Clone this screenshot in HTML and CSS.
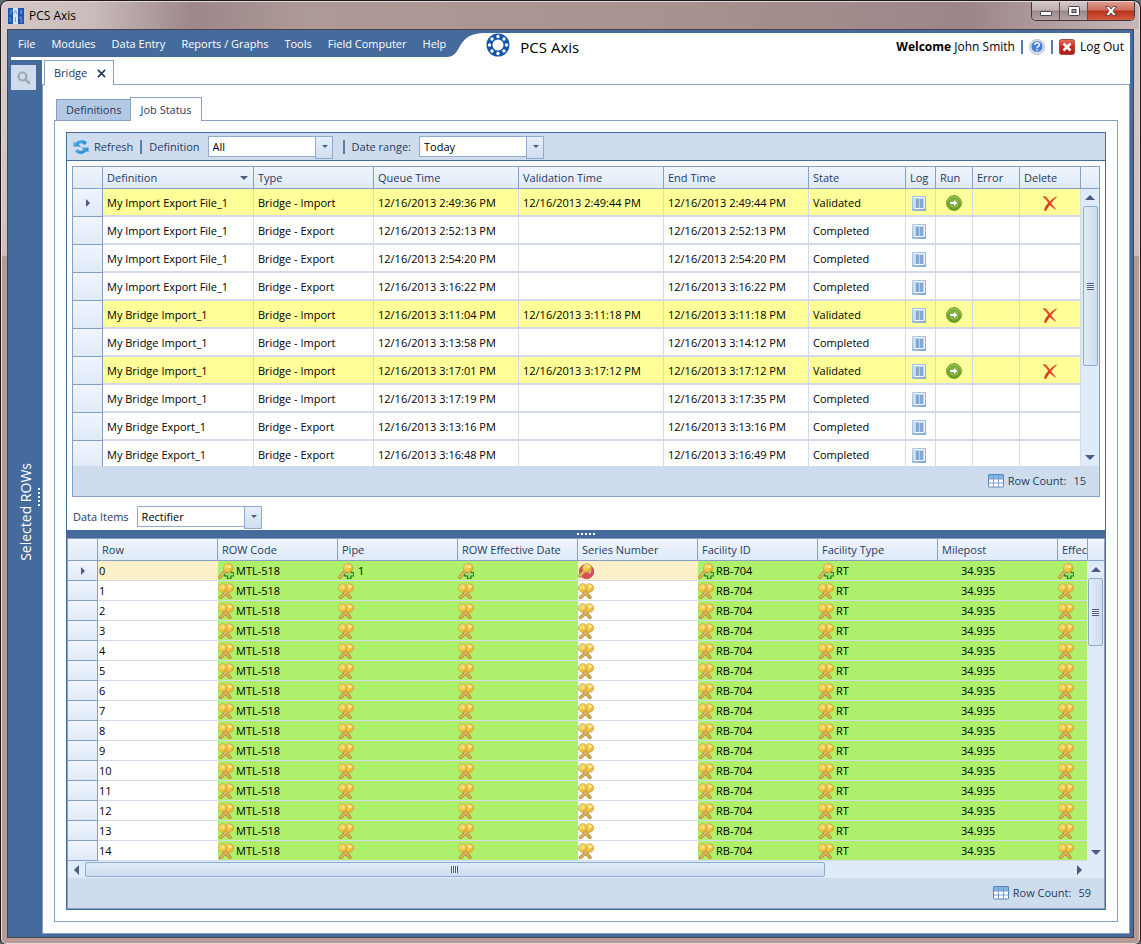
FILE: index.html
```html
<!DOCTYPE html>
<html lang="en">
<head>
  <meta charset="UTF-8">
  <title>PCS Axis</title>
  <link rel="stylesheet" href="styles.css">
</head>
<body>
<!-- icon definitions -->
<svg class="defs" aria-hidden="true">
  <defs>
    <linearGradient id="gold" x1="0" y1="0" x2="1" y2="1">
      <stop offset="0" stop-color="#fbe98c"/>
      <stop offset=".5" stop-color="#f2cf45"/>
      <stop offset="1" stop-color="#d9a23a"/>
    </linearGradient>
    <linearGradient id="green" x1="0" y1="0" x2="0" y2="1">
      <stop offset="0" stop-color="#a3cb57"/>
      <stop offset="1" stop-color="#5f9c12"/>
    </linearGradient>
    <linearGradient id="steel" x1="0" y1="0" x2="1" y2="1">
      <stop offset="0" stop-color="#b4d0ec"/>
      <stop offset="1" stop-color="#84a5cc"/>
    </linearGradient>
    <linearGradient id="red" x1="0" y1="0" x2="0" y2="1">
      <stop offset="0" stop-color="#e8705c"/>
      <stop offset=".5" stop-color="#c8291d"/>
      <stop offset="1" stop-color="#b01a12"/>
    </linearGradient>
    <linearGradient id="sky" x1="0" y1="0" x2="1" y2="1">
      <stop offset="0" stop-color="#5dc0f2"/>
      <stop offset="1" stop-color="#1877c9"/>
    </linearGradient>
  </defs>
  <symbol id="i-log" viewBox="0 0 16 16">
    <rect x="1" y="1" width="14" height="15" rx="1" fill="url(#steel)"/>
    <rect x="3" y="3" width="10" height="11" fill="#bcd3ec"/>
    <path d="M3 2.500h10.500v11H3z" fill="none" stroke="#eef5fd"/>
    <path d="M5 4h3v9H5zM9 4h3v9H9z" fill="#86a9d3"/>
  </symbol>
  <symbol id="i-run" viewBox="0 0 16 16">
    <circle cx="8" cy="8" r="7.400" fill="url(#green)" stroke="#6f9a36"/>
    <circle cx="8" cy="8" r="5.200" fill="#8fbf3c" stroke="#5f8f1c" stroke-width=".7"/>
    <path d="M3.800 6.500h3.700V4L12.200 8 7.500 12V9.500H3.800z" fill="#fff" stroke="#6f8f48" stroke-width=".8"/>
  </symbol>
  <symbol id="i-del" viewBox="0 0 16 16">
    <path d="M.5 2C2 .8 3.500 1 4.500 2.200L8 6.500C10 4 12.500 2 15.500 1.200 13 3.500 11 5.500 9.200 8l4.800 6.800C11.500 13.500 9.500 11.800 7.800 10 6.200 12.200 5 14 4.200 15.800H2C2.500 12.500 4 10.200 6.200 8 4.500 5.500 3 3.200.5 2z" fill="#dd3a1e"/>
    <path d="M2.500 2.200L8 8l5 5.500" fill="none" stroke="#f0765a" stroke-width=".8"/>
  </symbol>
  <symbol id="i-key" viewBox="0 0 16 16">
    <path d="M9.500 15.800V13h-3v-3.500h3V7h3.500v2.500h2.800V13H13v2.800z" fill="#9ce26c" stroke="#1c7d1c" stroke-width="1.200"/>
    <path d="M8.200 7.200L1.800 14.200" stroke="#b98833" stroke-width="3.400" stroke-linecap="round"/>
    <path d="M8 7.500L1.800 14" stroke="#e3c277" stroke-width="1.800" stroke-linecap="round"/>
    <circle cx="10.300" cy="5" r="4.600" fill="url(#gold)" stroke="#cf9f3a" stroke-width=".8"/>
    <circle cx="11.500" cy="3.800" r="1.300" fill="#fff4c0"/>
  </symbol>
  <symbol id="i-stop" viewBox="0 0 16 16">
    <circle cx="8.500" cy="8.500" r="7.200" fill="#d9505a" stroke="#b8434d" stroke-width=".8"/>
    <path d="M11 10.500c1-1 1.500-2 1.500-3.500" fill="none" stroke="#f2b8b4" stroke-width="2"/>
    <path d="M8 6.500L1.800 13" stroke="#b98833" stroke-width="3.400" stroke-linecap="round"/>
    <path d="M8 6.500L1.800 12.800" stroke="#e3c277" stroke-width="1.800" stroke-linecap="round"/>
    <circle cx="9" cy="5" r="4.300" fill="url(#gold)" stroke="#cf9f3a" stroke-width=".7"/>
    <circle cx="10.500" cy="3.800" r="1.100" fill="#fff4c0"/>
  </symbol>
  <symbol id="i-keys" viewBox="0 0 16 16">
    <path d="M5 7l7 7.500M11 7l-8.500 7.500" stroke="#b98833" stroke-width="3.400" stroke-linecap="round"/>
    <path d="M5 7l7 7.500M11 7l-8.500 7.500" stroke="#dcb562" stroke-width="1.800" stroke-linecap="round"/>
    <circle cx="11.300" cy="5" r="4.300" fill="url(#gold)" stroke="#cfa040" stroke-width=".8"/>
    <circle cx="4.700" cy="5" r="4.300" fill="url(#gold)" stroke="#cfa040" stroke-width=".8"/>
    <circle cx="3.200" cy="3.500" r="1.200" fill="#e3d37a"/>
    <circle cx="12.300" cy="3.700" r="1.300" fill="#fdf3bf"/>
    <path d="M5.500 3v3" stroke="#fff0a8" stroke-width="1.600"/>
  </symbol>
  <symbol id="i-grid" viewBox="0 0 16 14">
    <rect x=".5" y=".5" width="15" height="12.500" rx=".5" fill="#fff" stroke="#5b86bd"/>
    <path d="M1 1h14v4H1z" fill="#7db7e3"/>
    <path d="M1 5h14M1 9h14M5.500 1v12M10.500 1v12" stroke="#7d9cca"/>
  </symbol>
</svg>

<div class="window">
  <div class="titlebar">
    <svg class="app-icon" viewBox="0 0 16 16">
      <rect width="16" height="16" fill="#1b57b0"/>
      <rect x="5" width="5" height="16" fill="#dfe6f2"/>
      <path d="M2 2h2v2H2v2h2M2 9v4h2M6 6l1.500-4L9 6M7.500 9v5M12 2l2 4M14 2l-2 4M14 9h-2v2h2v3h-2" fill="none" stroke="#7596cf" stroke-width=".9"/>
    </svg>
    <span class="title">PCS Axis</span>
    <div class="controls">
      <button class="min" aria-label="Minimize"><svg viewBox="0 0 12 5"><rect x=".5" y=".5" width="11" height="4" rx=".5" fill="#fff" stroke="#4a4352"/></svg></button>
      <button class="max" aria-label="Maximize"><svg viewBox="0 0 12 10"><rect x=".5" y=".5" width="11" height="9" rx="1" fill="#fff" stroke="#4a4352"/><rect x="4" y="3.500" width="4" height="3" fill="#a39aa0" stroke="#4a4352"/></svg></button>
      <button class="close" aria-label="Close"><svg viewBox="0 0 12 10"><path d="M.5.5h3.300L6 3 8.200.5h3.300L8 5l3.500 4.500H8.200L6 7 3.800 9.500H.5L4 5z" fill="#fff" stroke="#53303a" stroke-width=".8"/></svg></button>
    </div>
  </div>

  <div class="app">
    <header class="header">
      <nav class="menu">
        <a href="#">File</a>
        <a href="#">Modules</a>
        <a href="#">Data Entry</a>
        <a href="#">Reports / Graphs</a>
        <a href="#">Tools</a>
        <a href="#">Field Computer</a>
        <a href="#">Help</a>
      </nav>
      <svg class="curve" viewBox="0 0 40 24"><path d="M0 0h40C22 0 18 7 14 13 10 20 8 24 0 24z" fill="#446b9c"/></svg>
      <svg class="logo" viewBox="0 0 24 24">
        <circle cx="12" cy="12" r="8.500" fill="none" stroke="#1554ac" stroke-width="6"/>
        <g fill="#fff">
          <circle cx="12" cy="3.500" r="1.700"/><circle cx="18" cy="6" r="1.700"/>
          <circle cx="20.500" cy="12" r="1.700"/><circle cx="18" cy="18" r="1.700"/>
          <circle cx="12" cy="20.500" r="1.700"/><circle cx="6" cy="18" r="1.700"/>
          <circle cx="3.500" cy="12" r="1.700"/><circle cx="6" cy="6" r="1.700"/>
        </g>
      </svg>
      <span class="brand">PCS Axis</span>
      <div class="user">
        <span><b>Welcome</b> John Smith</span>
        <i class="sep"></i>
        <a href="#" aria-label="Help">
          <svg class="icon" viewBox="0 0 16 16">
            <circle cx="8" cy="8" r="7.500" fill="#dfe3ea" stroke="#b9bfca"/>
            <circle cx="8" cy="7.500" r="5.600" fill="#4a7fd6"/>
            <path d="M5.800 6c0-3 4.600-3 4.600-.2C10.400 7.500 8 7.300 8 9.200M8 10.300v1.500" fill="none" stroke="#fff" stroke-width="1.500"/>
          </svg>
        </a>
        <i class="sep"></i>
        <a href="#" class="logout">
          <svg class="icon" viewBox="0 0 16 16">
            <rect x=".5" y=".5" width="15" height="15" rx="2" fill="url(#red)" stroke="#a84b41"/>
            <path d="M4.500 4.500l7 7M11.500 4.500l-7 7" stroke="#fff" stroke-width="2.600"/>
          </svg>
          Log Out
        </a>
      </div>
    </header>

    <div class="body">
      <aside class="sidebar">
        <div class="side-col">
          <button class="search" aria-label="Search">
            <svg viewBox="0 0 14 14"><circle cx="5.500" cy="5.500" r="4" fill="none" stroke="#a3a6ab" stroke-width="2.200"/><path d="M8.500 8.500L12 12" stroke="#a3a6ab" stroke-width="2.600" stroke-linecap="round"/></svg>
          </button>
          <div class="side-label"><span>Selected ROWs</span></div>
        </div>
        <div class="grip grip-v"><i></i><i></i><i></i><i></i><i></i></div>
      </aside>

      <main class="main">
        <div class="tabs">
          <div class="tab doc active"><a href="#">Bridge</a>
            <button class="tab-close" aria-label="Close tab"><svg viewBox="0 0 10 10"><path d="M1 1l8 8M9 1L1 9" stroke="#1f3a63" stroke-width="1.800"/></svg></button>
          </div>
        </div>
        <div class="page">
          <div class="tabs inner">
            <a href="#" class="tab">Definitions</a>
            <a href="#" class="tab active">Job Status</a>
          </div>
          <div class="page-inner">
            <div class="panel">
              <div class="toolbar">
                <button class="refresh">
                  <svg class="icon" viewBox="0 0 16 16">
                    <path d="M.5 2.500l2 1.500C5.500.3 11 .2 14 3.500L11.500 6C9.500 3.600 7 3.800 5.600 5.500L8 7.500H.5z" fill="url(#sky)"/>
                    <path d="M15.500 13.500l-2-1.500c-3 3.700-8.500 3.800-11.500.5L4.500 10c2 2.400 4.500 2.200 5.900.5L8 8.500h7.500z" fill="url(#sky)"/>
                  </svg>
                  Refresh
                </button>
                <i class="sep"></i>
                <label for="definition">Definition</label>
                <span class="combo"><select id="definition"><option>All</option></select></span>
                <i class="sep second"></i>
                <label for="range">Date range:</label>
                <span class="combo"><select id="range"><option>Today</option></select></span>
              </div>

              <div class="grid jobs">
                <div class="grid-body">
                  <div class="grid-view">
                    <table>
                      <colgroup>
                        <col class="c-mark"><col><col class="c-type"><col class="c-time"><col class="c-time"><col class="c-time">
                        <col class="c-state"><col class="c-log"><col class="c-run"><col class="c-error"><col class="c-delete">
                      </colgroup>
                      <thead>
                        <tr>
                          <th></th><th class="sorted">Definition</th><th>Type</th><th>Queue Time</th><th>Validation Time</th>
                          <th>End Time</th><th>State</th><th>Log</th><th>Run</th><th>Error</th><th>Delete</th>
                        </tr>
                      </thead>
                      <tbody id="jobs"></tbody>
                    </table>
                  </div>
                  <div class="vscroll">
                    <div class="vscroll-head"></div>
                    <i class="arrow up"></i>
                    <div class="thumb"><i class="lines"></i></div>
                    <i class="arrow down"></i>
                  </div>
                </div>
                <div class="grid-foot"><svg class="count-icon"><use href="#i-grid"/></svg>Row Count:<span>15</span></div>
              </div>

              <div class="items-bar">
                <label for="items">Data Items</label>
                <span class="combo"><select id="items"><option>Rectifier</option></select></span>
              </div>

              <div class="splitter"><div class="grip"><i></i><i></i><i></i><i></i><i></i></div></div>

              <div class="grid data">
                <div class="grid-body">
                  <div class="grid-view">
                    <table>
                      <thead>
                        <tr>
                          <th class="mark"></th><th>Row</th><th>ROW Code</th><th>Pipe</th><th>ROW Effective Date</th><th>Series Number</th>
                          <th>Facility ID</th><th>Facility Type</th><th>Milepost</th><th>Effec</th>
                        </tr>
                      </thead>
                      <tbody id="data"></tbody>
                    </table>
                  </div>
                  <div class="vscroll">
                    <div class="vscroll-head"></div>
                    <i class="arrow up"></i>
                    <div class="thumb"><i class="lines"></i></div>
                    <i class="arrow down"></i>
                  </div>
                </div>
                <div class="hscroll">
                  <i class="arrow left"></i>
                  <div class="track"><div class="thumb"><i class="lines"></i></div></div>
                  <i class="arrow right"></i>
                </div>
                <div class="grid-foot"><svg class="count-icon"><use href="#i-grid"/></svg>Row Count:<span>59</span></div>
              </div>
            </div>
          </div>
        </div>
      </main>
    </div>
  </div>
</div>

<script>
  var jobs = [
    ['My Import Export File_1', 'Import', '2:49:36', '2:49:44', '2:49:44'],
    ['My Import Export File_1', 'Export', '2:52:13', '', '2:52:13'],
    ['My Import Export File_1', 'Export', '2:54:20', '', '2:54:20'],
    ['My Import Export File_1', 'Export', '3:16:22', '', '3:16:22'],
    ['My Bridge Import_1', 'Import', '3:11:04', '3:11:18', '3:11:18'],
    ['My Bridge Import_1', 'Import', '3:13:58', '', '3:14:12'],
    ['My Bridge Import_1', 'Import', '3:17:01', '3:17:12', '3:17:12'],
    ['My Bridge Import_1', 'Import', '3:17:19', '', '3:17:35'],
    ['My Bridge Export_1', 'Export', '3:13:16', '', '3:13:16'],
    ['My Bridge Export_1', 'Export', '3:16:48', '', '3:16:49']
  ];

  function icon(name) {
    return '<svg class="icon"><use href="#i-' + name + '"/></svg>';
  }
  function time(t) {
    return t ? '12/16/2013 ' + t + ' PM' : '';
  }
  function button(name, label) {
    return '<button aria-label="' + label + '">' + icon(name) + '</button>';
  }

  // job list, a job with a validation time is still waiting to be run
  var html = '';
  for (var i = 0; i < jobs.length; i++) {
    var j = jobs[i];
    var valid = j[3] !== '';
    html += '<tr' + (valid ? ' class="validated"' : '') + '>' +
      '<th>' + (i === 0 ? '<i class="arrow right"></i>' : '') + '</th>' +
      '<td>' + j[0] + '</td><td>Bridge - ' + j[1] + '</td>' +
      '<td>' + time(j[2]) + '</td><td>' + time(j[3]) + '</td><td>' + time(j[4]) + '</td>' +
      '<td>' + (valid ? 'Validated' : 'Completed') + '</td>' +
      '<td class="act act-log">' + button('log', 'Log') + '</td>' +
      '<td class="act">' + (valid ? button('run', 'Run') : '') + '</td><td></td>' +
      '<td class="act">' + (valid ? button('del', 'Delete') : '') + '</td></tr>';
  }
  document.getElementById('jobs').innerHTML = html;

  // data rows
  html = '';
  for (var r = 0; r < 15; r++) {
    var first = r === 0;
    var key = icon(first ? 'key' : 'keys');
    html += '<tr' + (first ? ' class="current"' : '') + '>' +
      '<th>' + (first ? '<i class="arrow right"></i>' : '') + '</th>' +
      '<td class="row-no">' + r + '</td>' +
      '<td class="ok">' + key + 'MTL-518</td>' +
      '<td class="ok pipe">' + key + (first ? '1' : '') + '</td>' +
      '<td class="ok">' + key + '</td>' +
      '<td>' + icon(first ? 'stop' : 'keys') + '</td>' +
      '<td class="ok">' + key + 'RB-704</td>' +
      '<td class="ok">' + key + 'RT</td>' +
      '<td class="ok mile">34.935</td>' +
      '<td class="ok">' + key + '</td></tr>';
  }
  document.getElementById('data').innerHTML = html;
</script>
</body>
</html>
```

FILE: styles.css
```css
* {
  box-sizing: border-box;
  margin: 0;
  padding: 0;
}

body {
  background-color: #5d6b73;
  font: 11px/16px "Open Sans", "Noto Sans", sans-serif;
  color: #000;
}

a {
  color: inherit;
  text-decoration: none;
}

button, select {
  font: inherit;
  color: inherit;
  background: none;
  border: 0;
}

button svg {
  display: block;
}

.defs {
  position: absolute;
  width: 0;
  height: 0;
}

.icon {
  width: 16px;
  height: 16px;
  flex: none;
}

/* window frame */
.window {
  display: flex;
  flex-direction: column;
  min-height: 100vh;
  padding: 0 5px 6px;
  border: 1px solid #1c1719;
  border-radius: 8px 8px 6px 6px;
  box-shadow: inset 0 0 0 1px #e6d9d7;
  background: linear-gradient(#d9cecc 0, #d0bfbd 254px, #b59a96 256px, #b59a96 100%);
}

.titlebar {
  display: flex;
  align-items: center;
  height: 27px;
  margin: 1px -4px 0;
  padding-left: 6px;
  border-radius: 7px 7px 0 0;
  background: linear-gradient(90deg, #d5cac9 0, #c9bcbb 90px, #9d878a 190px, #ad9997 300px, #a8928f 60%, #9b8588 85%, #c8b7b8 100%);
}

.app-icon {
  width: 16px;
  height: 16px;
}

.title {
  padding: 0 5px;
  font-size: 12px;
}

.controls {
  display: flex;
  align-self: flex-start;
  margin-left: auto;
  margin-right: 4px;
  border: 1px solid #43363b;
  border-top: 0;
  border-radius: 0 0 5px 5px;
  overflow: hidden;
}

.controls button {
  display: flex;
  align-items: center;
  justify-content: center;
  width: 28px;
  height: 18px;
  border-right: 1px solid #5b4d52;
  background: linear-gradient(#d2c6c6 0, #bfb0b0 45%, #998789 50%, #b3a4a3 100%);
}

.controls svg {
  width: 12px;
  height: 10px;
}

.controls .min {
  padding-top: 4px;
}

.controls .min svg {
  height: 5px;
}

.controls .close {
  width: 46px;
  border-right: 0;
  background: linear-gradient(#dd9c8c 0, #cd6f5c 45%, #b8301b 50%, #d65c3e 100%);
}

.app {
  display: flex;
  flex-direction: column;
  flex: 1;
  margin: 0 1px;
  padding: 3px;
  border: 1px solid #4c4149;
  background-color: #446b9c;
}

/* header */
.header {
  display: flex;
  align-items: flex-start;
  height: 27px;
  background-color: #fff;
}

.menu {
  display: flex;
  gap: 16px;
  height: 24px;
  padding-left: 7px;
  line-height: 22px;
  background-color: #446b9c;
  color: #fff;
}

.curve {
  width: 40px;
  height: 24px;
}

.logo {
  width: 24px;
  height: 24px;
}

.brand {
  margin-left: 10px;
  font-size: 15px;
  line-height: 28px;
}

.user {
  display: flex;
  align-items: center;
  gap: 6px;
  margin-left: auto;
  padding-right: 6px;
  height: 28px;
  font-size: 12px;
}

.user a {
  display: flex;
  align-items: center;
  gap: 5px;
}

.sep {
  width: 2px;
  height: 14px;
  background-color: #5a7dad;
}

.body {
  display: flex;
  flex: 1;
}

/* left bar */
.sidebar {
  display: flex;
  width: 31px;
}

.side-col {
  display: flex;
  flex-direction: column;
  width: 25px;
  padding-top: 5px;
}

.search {
  display: flex;
  align-items: center;
  justify-content: center;
  width: 25px;
  height: 25px;
  background-color: #cfdcee;
}

.search svg {
  width: 14px;
  height: 14px;
}

.side-label {
  display: flex;
  flex: 1;
  align-items: center;
  justify-content: center;
  padding-left: 4px;
  font-size: 14px;
  color: #fff;
}

.side-label span {
  writing-mode: vertical-rl;
  transform: rotate(180deg);
}

.grip {
  display: flex;
  align-items: center;
  justify-content: center;
  gap: 2px;
}

.grip i {
  width: 2px;
  height: 2px;
  background-color: #fff;
}

.grip-v {
  flex-direction: column;
  margin-left: 2px;
}

/* tabs */
.main {
  display: flex;
  flex: 1;
  flex-direction: column;
  min-width: 0;
  background-color: #fff;
}

.tabs {
  display: flex;
  align-items: flex-end;
  height: 25px;
  margin-bottom: -1px;
  padding-left: 2px;
  position: relative;
  color: #1f3a63;
}

.tab {
  height: 22px;
  padding: 0 9px;
  border: 1px solid #869fc3;
  line-height: 20px;
  background-color: #b3c9e3;
}

.tab + .tab {
  margin-left: -1px;
}

.tab.active {
  height: 24px;
  line-height: 24px;
  border-bottom: 0;
  background-color: #fff;
}

.tab.doc {
  display: flex;
  align-items: center;
  gap: 10px;
  height: 25px;
  padding-right: 7px;
  line-height: 26px;
}

.tab-close {
  width: 9px;
  height: 9px;
}

.page {
  display: flex;
  flex: 1;
  flex-direction: column;
  padding: 11px;
  border: 1px solid #869fc3;
}

.page-inner {
  display: flex;
  flex: 1;
  flex-direction: column;
  padding: 11px;
  border: 1px solid #869fc3;
}

.panel {
  display: flex;
  flex: 1;
  flex-direction: column;
  border: 1px solid #446b9c;
}

.toolbar {
  display: flex;
  align-items: center;
  gap: 7px;
  height: 28px;
  padding-left: 6px;
  border-bottom: 1px solid #446b9c;
  background-color: #cfdcee;
  color: #1f3a63;
}

.toolbar .combo {
  margin-left: 1px;
}

.toolbar .second {
  margin-left: 3px;
}

.refresh {
  display: flex;
  gap: 5px;
}

.combo {
  display: flex;
  position: relative;
  width: 125px;
  height: 21px;
  color: #000;
}

.combo select {
  width: 100%;
  padding: 0 22px 0 4px;
  border: 1px solid #8fabd0;
  border-radius: 0;
  appearance: none;
  background-color: #fff;
}

/* drop-down button drawn over the select */
.combo::before {
  content: "";
  position: absolute;
  top: 0;
  right: 0;
  width: 16px;
  height: 21px;
  border: 1px solid #8fabd0;
  background: linear-gradient(#e6eff9, #cfdef0);
  pointer-events: none;
}

.combo::after {
  content: "";
  position: absolute;
  top: 9px;
  right: 5px;
  border: 3px solid transparent;
  border-top-color: #4c5a80;
  border-bottom: 0;
  pointer-events: none;
}

/* grids */
.grid {
  display: flex;
  flex-direction: column;
  border: 1px solid #869fc3;
}

.jobs {
  margin: 5px 5px 0;
}

.data {
  flex: 1;
}

.grid-body {
  display: flex;
}

.jobs .grid-body {
  height: 299px;
}

.data .grid-body {
  flex: 1;
}

.grid-view {
  flex: 1;
  min-width: 0;
  overflow: hidden;
}

table {
  width: 100%;
  border-collapse: separate;
  border-spacing: 0;
  table-layout: fixed;
}

.data table {
  width: 1110px;
}

.c-mark, .data .mark { width: 30px; }
.c-type { width: 120px; }
.c-time { width: 145px; }
.c-state { width: 97px; }
.c-log { width: 30px; }
.c-run { width: 37px; }
.c-error { width: 47px; }
.c-delete { width: 61px; }

th, td {
  overflow: hidden;
  padding: 0 4px;
  text-align: left;
  white-space: nowrap;
}

th {
  font-weight: normal;
  color: #1f3a63;
  border-right: 1px solid #869fc3;
  border-bottom: 1px solid #869fc3;
  background: linear-gradient(#f0f5fc, #dfeaf8);
}

thead th {
  height: 22px;
}

.sorted {
  position: relative;
}

.sorted::after {
  content: "";
  position: absolute;
  top: 9px;
  right: 5px;
  border: 4px solid transparent;
  border-top-color: #4c5a80;
  border-bottom: 0;
}

.jobs tbody th, .jobs td {
  height: 28px;
}

.jobs td {
  padding-top: 2px;
  border-right: 1px solid #d4dbe8;
  border-bottom: 2px solid #d4dbe8;
}

.validated td {
  background-color: #ffff99;
}

.jobs .act {
  padding: 2px 0 0;
}

.jobs .act-log {
  padding-right: 3px;
}

.act button {
  display: block;
  margin: 0 auto;
}

.act .icon {
  display: block;
  width: 16px;
  height: 16px;
}

.data tbody th, .data td {
  height: 20px;
}

.data td {
  padding: 0;
  border-bottom: 1px solid #d4dbe8;
  line-height: 16px;
}

.data td .icon {
  margin-right: 2px;
  vertical-align: top;
}

.data .ok {
  background-color: #aeef6c;
}

.data .row-no {
  padding-left: 1px;
}

.data .mile {
  padding-left: 23px;
}

.data .pipe .icon {
  margin-right: 4px;
}

.current td {
  background-color: #fcf0c8;
}

/* scroll bars */
.arrow {
  display: block;
  width: 0;
  height: 0;
  border: 5px solid transparent;
}

.arrow.up { border-bottom-color: #4c5a80; border-top: 0; }
.arrow.down { border-top-color: #4c5a80; border-bottom: 0; }
.arrow.left { border-right-color: #4c5a80; border-left: 0; }
.arrow.right { border-left-color: #4c5a80; border-right: 0; }

th .arrow.right {
  margin: 0 auto;
  border-width: 4px 0 4px 4px;
}

.vscroll {
  display: flex;
  flex-direction: column;
  align-items: center;
  width: 18px;
  background-color: #e0ebf9;
}

.data .vscroll {
  width: 17px;
}

.vscroll-head {
  width: 100%;
  height: 22px;
  border-bottom: 1px solid #869fc3;
  background: linear-gradient(#f0f5fc, #dfeaf8);
}

.data .vscroll-head {
  border-left: 1px solid #869fc3;
}

.vscroll .up {
  margin: 6px 0;
}

.vscroll .down {
  margin: auto 0 6px;
}

.thumb {
  display: flex;
  align-items: center;
  justify-content: center;
  border: 1px solid #8fabd0;
  border-radius: 2px;
}

.vscroll .thumb {
  width: 15px;
  height: 160px;
  background: linear-gradient(90deg, #e0ebf8, #cddcef);
}

.data .vscroll .thumb {
  height: 68px;
}

.vscroll .lines {
  width: 7px;
  height: 7px;
  background: repeating-linear-gradient(#4c5a80 0, #4c5a80 1px, #eef4fb 1px, #eef4fb 2px);
}

.hscroll {
  display: flex;
  align-items: center;
  gap: 6px;
  height: 17px;
  padding: 0 22px 0 6px;
  background-color: #e0ebf9;
}

.hscroll .track {
  flex: 1;
}

.hscroll .thumb {
  width: 75%;
  height: 15px;
  background: linear-gradient(#e0ebf8, #cddcef);
}

.hscroll .lines {
  width: 7px;
  height: 7px;
  background: repeating-linear-gradient(90deg, #4c5a80 0, #4c5a80 1px, #eef4fb 1px, #eef4fb 2px);
}

.grid-foot {
  display: flex;
  align-items: center;
  justify-content: flex-end;
  height: 30px;
  padding-right: 13px;
  background-color: #cfdcee;
  color: #1f3a63;
}

.grid-foot span {
  margin-left: 7px;
}

.count-icon {
  width: 16px;
  height: 14px;
  margin-right: 4px;
}

.items-bar {
  display: flex;
  align-items: center;
  gap: 8px;
  height: 33px;
  padding: 6px 6px 0;
  color: #1f3a63;
}

.splitter {
  display: flex;
  justify-content: center;
  height: 8px;
  background-color: #446b9c;
}
```
